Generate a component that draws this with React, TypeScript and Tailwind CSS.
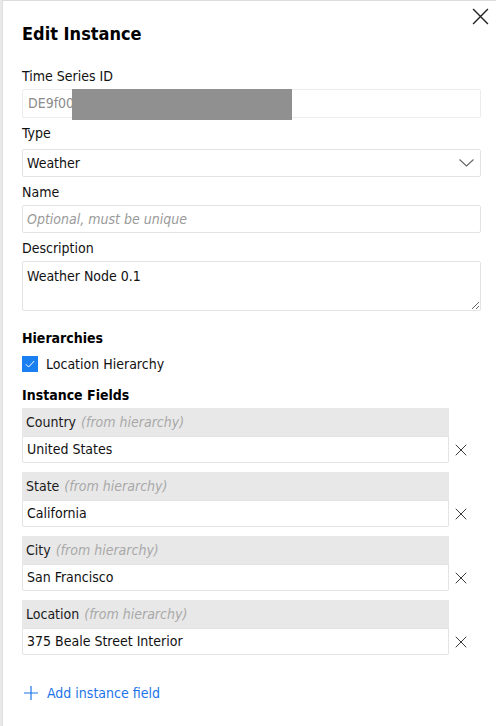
import React from "react";

const font = { fontFamily: '"DejaVu Sans Condensed", "DejaVu Sans", sans-serif' };

function XIcon({ size, className }: { size: number; className?: string }) {
  return (
    <svg width={size} height={size} viewBox="0 0 16 16" className={className} fill="none">
      <path d="M1 1L15 15M15 1L1 15" stroke="currentColor" strokeWidth="1.3" />
    </svg>
  );
}

function Field({ label, value }: { label: string; value: string }) {
  return (
    <div className="flex items-center">
      <div className="w-[427px] flex flex-col">
        <div className="h-[28px] bg-[#e8e8e8] flex items-center pl-[4px] text-[14px] text-[#1a1a1a]">
          <span>{label}</span>
          <span className="italic text-[#a8a8a8] ml-[5px]">(from hierarchy)</span>
        </div>
        <div className="h-[27px] border border-[#e3e3e3] rounded-b-[2px] bg-white flex items-center pl-[4px] text-[14px] text-[#111]">
          {value}
        </div>
      </div>
      <div className="mt-[28px] h-[27px] flex items-center pl-[6px]">
        <XIcon size={12} className="text-[#333]" />
      </div>
    </div>
  );
}

export default function App() {
  return (
    <div className="w-[496px] h-[726px] bg-[#ececec] flex overflow-hidden" style={font}>
      <div className="w-[3px] shrink-0 bg-[#e9e9e9] border-r border-[#dedede]" />
      <div className="relative flex-1 bg-white border-t border-[#dcdcdc] pl-[19px] pr-[15px] pt-[21px] flex flex-col text-[#111]">
        <button className="absolute right-[7px] top-[7px] text-[#222]">
          <XIcon size={17} />
        </button>
        <div className="text-[18px] leading-[24px] font-bold text-black">Edit Instance</div>

        <div className="mt-[20px] text-[14px] leading-[20px]">Time Series ID</div>
        <div className="relative mt-[3px] h-[29px] border border-[#ececec] rounded-[2px] flex items-center pl-[5px] text-[14px] text-[#8c8c8c]">
          <span>DE9f00</span>
          <div className="absolute left-[49px] top-[-1px] w-[220px] h-[31px] bg-[#909090]" />
        </div>

        <div className="mt-[5px] text-[14px] leading-[20px]">Type</div>
        <div className="mt-[6px] h-[28px] border border-[#e3e3e3] rounded-[2px] flex items-center justify-between pl-[4px] pr-[6px] text-[14px] text-[#111]">
          <span>Weather</span>
          <svg width="15" height="8" viewBox="0 0 15 8" fill="none">
            <path d="M0.5 0.5L7.5 7L14.5 0.5" stroke="#666" strokeWidth="1.1" />
          </svg>
        </div>

        <div className="mt-[5px] text-[14px] leading-[20px]">Name</div>
        <input
          className="mt-[3px] h-[28px] border border-[#e3e3e3] rounded-[2px] pl-[4px] text-[14px] text-[#111] outline-none placeholder:italic placeholder:text-[#9a9a9a]"
          style={font}
          placeholder="Optional, must be unique"
        />

        <div className="mt-[5px] text-[14px] leading-[20px]">Description</div>
        <textarea
          className="mt-[3px] h-[50px] border border-[#e3e3e3] rounded-[2px] pl-[4px] pt-[4px] text-[14px] leading-[20px] text-[#111] outline-none"
          style={font}
          defaultValue="Weather Node 0.1"
        />

        <div className="mt-[17px] text-[14px] leading-[20px] font-bold text-black">Hierarchies</div>
        <div className="mt-[8px] flex items-center h-[16px]">
          <div className="w-[16px] h-[16px] bg-[#1a7ff0] flex items-center justify-center">
            <svg width="10" height="8" viewBox="0 0 10 8" fill="none">
              <path d="M0.8 4.2L3.6 7L9.2 1" stroke="white" strokeWidth="1" />
            </svg>
          </div>
          <span className="ml-[8px] text-[14px]">Location Hierarchy</span>
        </div>

        <div className="mt-[13px] text-[14px] leading-[20px] font-bold text-black">Instance Fields</div>
        <div className="mt-[3px] flex flex-col gap-[9px]">
          <Field label="Country" value="United States" />
          <Field label="State" value="California" />
          <Field label="City" value="San Francisco" />
          <Field label="Location" value="375 Beale Street Interior" />
        </div>

        <div className="mt-[28px] h-[20px] flex items-center text-[#1d74e8] text-[14px]">
          <svg width="14" height="14" viewBox="0 0 14 14" fill="none" className="ml-[2px]">
            <path d="M7 0V14M0 7H14" stroke="currentColor" strokeWidth="1.2" />
          </svg>
          <span className="ml-[9px]">Add instance field</span>
        </div>
      </div>
    </div>
  );
}
